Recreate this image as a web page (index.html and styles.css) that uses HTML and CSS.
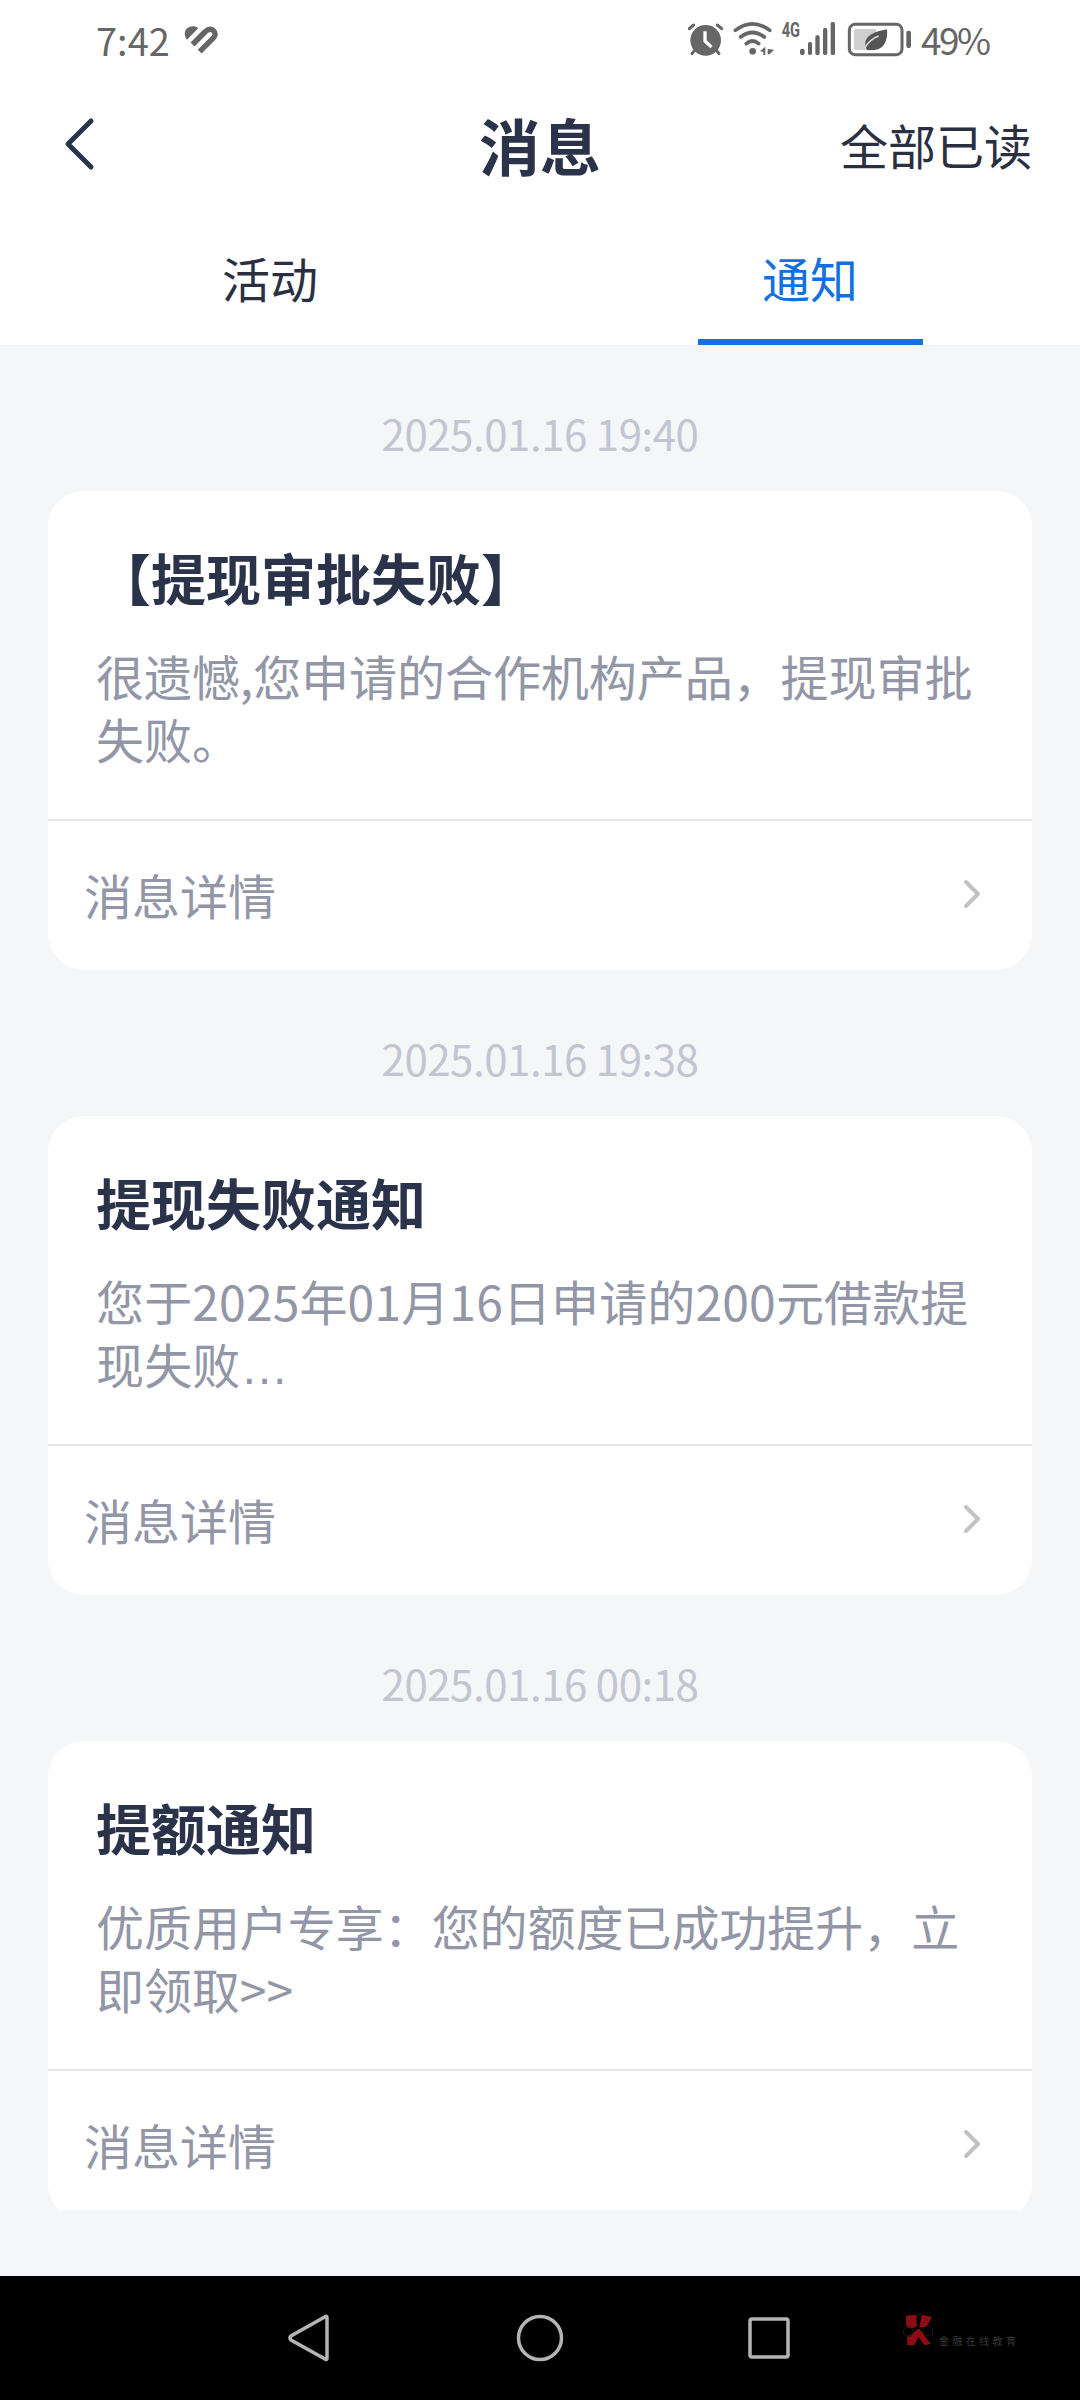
FILE: index.html
```html
<!DOCTYPE html>
<html lang="zh-CN">
<head>
<meta charset="utf-8">
<title>消息</title>
<link rel="stylesheet" href="styles.css">
</head>
<body>
<div class="screen">
  <div class="status">
    <span class="clock">7:42</span>
    <svg class="heart" width="36" height="30" viewBox="372 74 108 90" fill="none" stroke="#666" stroke-width="16">
      <path d="M375 106C371 86 388 74 407 79L415 83L381 118Q376 113 375 106Z" fill="#666" stroke="none"/>
      <path d="M398 132L436 94"/>
      <path d="M398 132L436 94Q447 83 458 89Q472 99 460 113L419 154"/>
      <path d="M408 143L447 105" stroke="#fff" stroke-width="5"/>
    </svg>
    <div class="indicators">
      <svg width="36" height="37" viewBox="54 60 108 111" fill="none" stroke="#666" stroke-linecap="round">
        <circle cx="107" cy="121" r="46" fill="#666" stroke="none"/>
        <path d="M58 86L71 75M155 86L142 75" stroke-width="9"/>
        <path d="M73 152L66 161M140 152L147 161" stroke-width="9"/>
        <path d="M105 99V123L121 138" stroke="#fff" stroke-width="10" stroke-linecap="square"/>
      </svg>
      <svg class="wifi" width="42" height="37" viewBox="189 60 126 111" fill="none" stroke="#666" stroke-width="11" stroke-linecap="round">
        <path d="M196 91Q247 52 299 91M212 111Q247 84 283 111M229 131Q247 115 266 131"/>
        <circle cx="248" cy="154" r="10" fill="#666" stroke="none"/>
        <path d="M270 154L286 140V165H280V156ZM293 147L312 149L299 163H293Z" fill="#666" stroke="none"/>
      </svg>
      <svg class="signal" width="54" height="37" viewBox="336 60 162 111" fill="#666">
        <text x="335" y="110" font-size="58" font-weight="700" textLength="55" lengthAdjust="spacingAndGlyphs" class="net">4G</text>
        <rect x="390" y="146" width="14" height="19" rx="6"/>
        <rect x="414" y="126" width="12" height="39" rx="5"/>
        <rect x="436" y="106" width="13" height="59" rx="5"/>
        <rect x="459" y="84" width="13" height="81" rx="5"/>
        <rect x="482" y="66" width="13" height="99" rx="5"/>
      </svg>
      <svg class="battery" width="65" height="37" viewBox="531 60 195 111" fill="none">
        <rect x="538" y="73" width="158" height="91" rx="17" stroke="#666" stroke-width="9"/>
        <path d="M558 87H618V150H558Q552 150 552 144V93Q552 87 558 87Z" fill="#cfcfcf"/>
        <rect x="709" y="92" width="14" height="52" rx="6" fill="#666"/>
        <path d="M651 88C654 122 642 154 603 150L592 151C576 122 592 98 651 88Z" fill="#555"/>
        <path d="M584 145Q598 118 626 108" stroke="#ddd" stroke-width="4"/>
      </svg>
      <span class="percent">49%</span>
    </div>
  </div>

  <header class="nav">
    <svg class="back" width="32" height="56" viewBox="0 0 32 56" fill="none" stroke="#2a3349" stroke-width="5" stroke-linecap="round" stroke-linejoin="round"><path d="M28 5L5 28L28 51"/></svg>
    <h1>消息</h1>
    <span class="read-all">全部已读</span>
  </header>

  <div class="tabs">
    <div class="tab"><span>活动</span></div>
    <div class="tab active"><span>通知</span></div>
  </div>

  <main class="list">
    <time>2025.01.16 19:40</time>
    <section class="card">
      <div class="body">
        <h2>【提现审批失败】</h2>
        <p>很遗憾,您申请的合作机构产品，提现审批失败。</p>
      </div>
      <div class="more"><span>消息详情</span>
        <svg width="20" height="32" viewBox="0 0 20 32" class="chev"><path d="M4 4L16 16L4 28"/></svg>
      </div>
    </section>

    <time>2025.01.16 19:38</time>
    <section class="card">
      <div class="body">
        <h2>提现失败通知</h2>
        <p class="loose">您于2025年01月16日申请的200元借款提现失败<span class="dots">…</span></p>
      </div>
      <div class="more"><span>消息详情</span>
        <svg width="20" height="32" viewBox="0 0 20 32" class="chev"><path d="M4 4L16 16L4 28"/></svg>
      </div>
    </section>

    <time>2025.01.16 00:18</time>
    <section class="card">
      <div class="body">
        <h2>提额通知</h2>
        <p>优质用户专享：您的额度已成功提升，立即领取&gt;&gt;</p>
      </div>
      <div class="more"><span>消息详情</span>
        <svg width="20" height="32" viewBox="0 0 20 32" class="chev"><path d="M4 4L16 16L4 28"/></svg>
      </div>
    </section>
  </main>

  <footer class="keys">
    <svg width="44" height="50" viewBox="0 0 44 50"><path d="M38.500 3.500Q40 2.500 40 5V45Q40 47.500 38 46L4 27Q2 25 4 23Z"/></svg>
    <svg width="50" height="50" viewBox="0 0 50 50"><circle cx="25" cy="25" r="21.500"/></svg>
    <svg width="46" height="46" viewBox="0 0 46 46"><rect x="4" y="4" width="38" height="38" rx="2"/></svg>
    <div class="mark">
      <svg class="logo" width="32" height="34" viewBox="126 98 96 102">
        <g fill="#8f0d12"><path d="M138 106L169 103L171 137Q154 150 139 139Z"/><path d="M186 103L216 110L201 137Q190 143 178 139Z"/><path d="M142 167Q160 162 171 147H179L212 190L194 195L175 170L162 195H142Z"/></g>
        <g fill="none" stroke="#1c1c1c" stroke-width="3"><circle cx="145" cy="154" r="15"/><circle cx="203" cy="152" r="15"/></g>
      </svg>
      <span>金融在线教育</span>
    </div>
  </footer>
</div>
</body>
</html>
```
FILE: styles.css
```css
* { box-sizing: border-box; margin: 0; padding: 0; }

body {
  font-family: "Noto Sans CJK SC", sans-serif;
  background: #fff;
}

svg { display: block; flex: none; }

.screen {
  width: 1080px;
  height: 2400px;
  display: flex;
  flex-direction: column;
  overflow: hidden;
}

/* status bar */
.status {
  height: 80px;
  padding: 20px 88px 0 96px;
  display: flex;
  align-items: flex-start;
  color: #666;
}
.clock { font-size: 38px; line-height: 40px; width: 88px; }
.heart { margin-top: 5px; }
.indicators { display: flex; margin-left: auto; }
.wifi { margin-left: 9px; }
.signal { margin-left: 7px; }
.battery { margin-left: 11px; }
.net { font-family: Roboto, sans-serif; }
.percent {
  width: 71px;
  margin-left: 9px;
  font-size: 37px;
  line-height: 38px;
  letter-spacing: -2.5px;
  white-space: nowrap;
}

/* title row */
.nav {
  height: 130px;
  padding: 0 48px 0 63px;
  display: grid;
  grid-template-columns: 1fr auto 1fr;
  align-items: center;
  color: #2a3349;
}
.back { margin-top: -3px; }
.nav h1 { font-size: 61px; line-height: 72px; font-weight: 700; margin-left: -15px; }
.read-all {
  margin-top: -3px;
  font-size: 48px;
  line-height: 64px;
  text-align: right;
  color: #2b2f42;
}

/* tabs */
.tabs { height: 135px; display: flex; }
.tab {
  flex: 1;
  display: flex;
  flex-direction: column;
  align-items: center;
  font-size: 48px;
  line-height: 64px;
  padding-top: 35px;
  color: #2b2f42;
}
.tab.active { color: #1270e0; }
.tab.active::after {
  content: "";
  width: 225px;
  height: 6px;
  margin-top: auto;
  background: #1270e0;
}

/* messages */
.list {
  height: 1931px;
  padding: 0 48px;
  border-bottom: 66px solid #f5f6f8;
  background: #f5f6f8;
  overflow: hidden;
}
time {
  display: block;
  height: 146px;
  padding-top: 58px;
  text-align: center;
  font-size: 42px;
  line-height: 60px;
  letter-spacing: -0.45px;
  color: #c3c5d0;
}
.card {
  height: 479px;
  border-radius: 36px;
  background: #fff;
}
.body {
  height: 330px;
  padding: 50px 48px 0;
  border-bottom: 2px solid #e6e6e8;
}
.body h2 {
  font-size: 55px;
  line-height: 70px;
  font-weight: 700;
  color: #2a3349;
}
.body p {
  margin-top: 33px;
  font-size: 48px;
  line-height: 63px;
  letter-spacing: -0.05px;
  color: #9296a6;
}
.body p.loose { letter-spacing: 0.15px; }
.dots { font-family: "Liberation Sans", sans-serif; }
.more {
  height: 149px;
  padding: 0 50px 3px 36px;
  display: flex;
  align-items: center;
  justify-content: space-between;
  font-size: 48px;
  line-height: 64px;
  color: #9296a6;
}
.chev { fill: none; stroke: #c2c2c2; stroke-width: 4; stroke-linecap: round; stroke-linejoin: round; }

/* system keys */
.keys {
  height: 124px;
  background: #000;
  display: flex;
  align-items: center;
  padding-left: 287px;
}
.keys > svg { fill: none; stroke: #b4b4b4; stroke-width: 3.5px; }
.keys > svg:nth-child(2) { margin-left: 184px; }
.keys > svg:nth-child(3) { margin-left: 181px; }
.mark { display: flex; align-items: flex-end; margin: -17px 0 0 110px; }
.mark span {
  margin: 0 0 -2px 5px;
  font-size: 10px;
  line-height: 16px;
  letter-spacing: 3.4px;
  color: #3a3a3a;
  white-space: nowrap;
}
```
